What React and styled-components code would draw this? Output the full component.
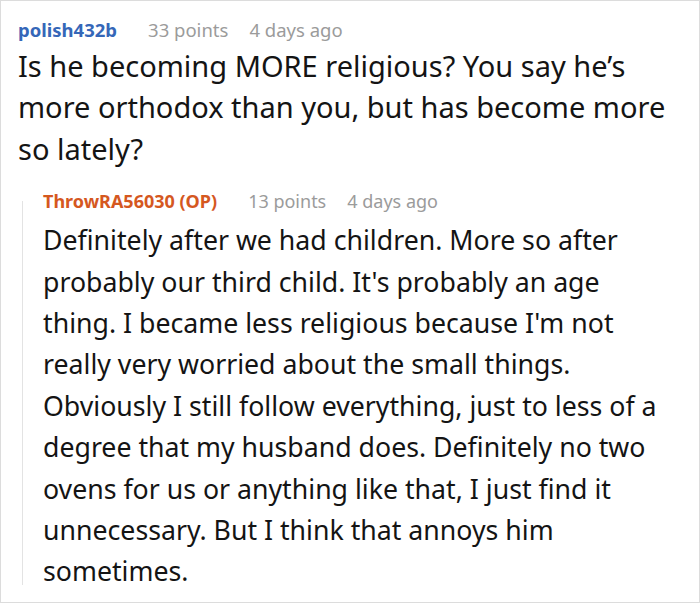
import React from 'react';
import styled, { createGlobalStyle } from 'styled-components';

const GlobalStyle = createGlobalStyle`
    body {
        margin: 0;
        background: #fff;
        font-family: "Noto Sans", "Open Sans", sans-serif;
    }
`;

const Frame = styled.div`
    box-sizing: border-box;
    width: 700px;
    height: 603px;
    border: 1px solid #dcdcdc;
    padding: 16px 0 0 17px;
    overflow: hidden;
`;

const Comment = styled.div`
    display: flex;
    flex-direction: column;
    width: ${props => props.width}px;
    flex: 0 0 auto;
`;

// thread line + nested reply
const Reply = styled.div`
    display: flex;
    margin: 19px 0 0 4px;
`;

const ThreadLine = styled.div`
    flex: 0 0 1px;
    margin: 13px 20px 7px 0;
    background: #e3e3e3;
`;

const Meta = styled.div`
    display: flex;
    align-items: baseline;
    gap: 21px;
    font-size: ${props => props.size}px;
    line-height: 26px;
    color: #9b9b9b;
`;

const Author = styled.span`
    font-weight: 700;
    color: ${props => props.op ? '#d5581f' : '#3567b8'};
    margin-right: 10px;
`;

const Body = styled.p`
    margin: ${props => props.gap}px 0 0;
    font-size: ${props => props.size}px;
    line-height: 41.4px;
    color: #141414;
`;

const CommentBlock = ({ author, points, age, op, metaSize, bodySize, gap, width, children }) => (
    <Comment width={width}>
        <Meta size={metaSize}>
            <Author op={op}>{author}</Author>
            <span>{points} points</span>
            <span>{age}</span>
        </Meta>
        <Body size={bodySize} gap={gap}>{children}</Body>
    </Comment>
);

const App = () => (
    <>
        <GlobalStyle />
        <Frame>
            <CommentBlock author="polish432b" points={33} age="4 days ago" metaSize={18.5} bodySize={29} gap={2} width={650}>
                Is he becoming MORE religious? You say he’s more orthodox than you, but has become more so lately?
            </CommentBlock>
            <Reply>
                <ThreadLine />
                <CommentBlock author="ThrowRA56030 (OP)" points={13} age="4 days ago" op metaSize={18} bodySize={26.7} gap={5} width={630}>
                    Definitely after we had children. More so after probably our third child. It's probably an age thing. I became less religious because I'm not really very worried about the small things. Obviously I still follow everything, just to less of a degree that my husband does. Definitely no two ovens for us or anything like that, I just find it unnecessary. But I think that annoys him sometimes.
                </CommentBlock>
            </Reply>
        </Frame>
    </>
);

export default App;
